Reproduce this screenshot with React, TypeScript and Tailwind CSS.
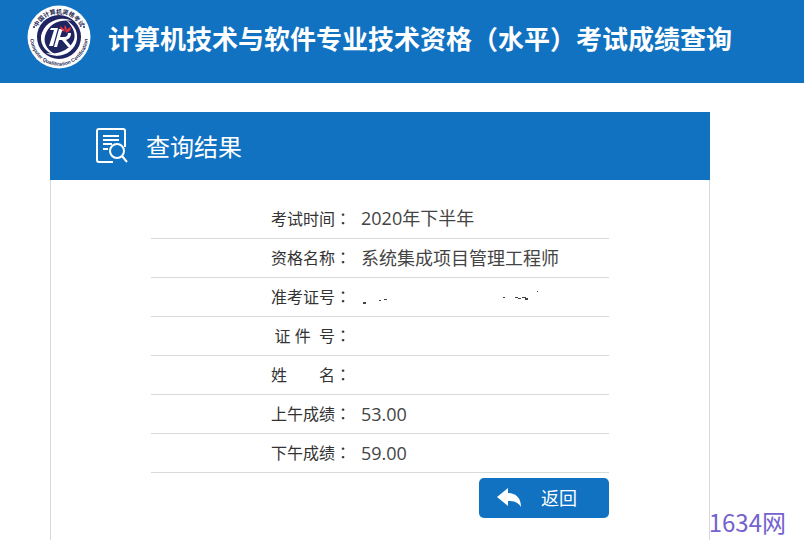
const rows = [
  { label: '考试时间', value: '2020年下半年' },
  { label: '资格名称', value: '系统集成项目管理工程师' },
  { label: '准考证号', value: '', masked: true },
  { label: '证\u00a0件\u00a0\u00a0号', value: '' },
  { label: '姓\u3000\u3000名', value: '' },
  { label: '上午成绩', value: '53.00' },
  { label: '下午成绩', value: '59.00' },
];

function Logo() {
  return (
    <svg viewBox="0 0 64 64" className="h-16 w-16 shrink-0" role="img" aria-label="中国计算机资格考试">
      <defs>
        <path id="ring-top" d="M8.5 32a23.5 23.5 0 0 1 47 0" />
        <path id="ring-bottom" d="M3.8 26a28.8 28.8 0 1 0 56.4 0" />
      </defs>
      <circle cx="32" cy="32" r="31.5" fill="#fff" />
      <text fontSize="6" fontWeight="700" fill="#23264f" textAnchor="middle">
        <textPath href="#ring-top" startOffset="50%">中国计算机资格考试</textPath>
      </text>
      <text fontSize="5" fontWeight="700" fill="#23264f" textAnchor="middle" className="font-['Liberation_Sans',sans-serif]">
        <textPath href="#ring-bottom" startOffset="50%">Computer Qualification Certification</textPath>
      </text>
      <circle cx="7" cy="22" r="1" fill="#23264f" />
      <circle cx="57" cy="22" r="1" fill="#23264f" />
      <circle cx="32" cy="32" r="22" fill="#1f2561" />
      {/* 内圈白色弧线 */}
      <path d="M45 16C33 10 17 17 14 31c-1 10 6 18 18 20-11-4-16-12-14-20 3-11 13-17 27-15z" fill="#fff" />
      <path d="M19 48c13 7 29 0 31-14 1-9-4-15-11-19 7 7 10 13 8 20-4 9-14 15-28 13z" fill="#fff" />
      <path d="M27 25h-4l1-2h7l-5 18h-4z" fill="#fff" />
      <path d="M32 24h5l-1 2h-1l-2 6h4c3 0 4-2 4-4h3c0 4-2 6-5 7l6 7h-4l-6-7h-3l-2 7h-3z" fill="#fff" />
      <path d="M33 21c2 1 4 3 5 6-3-1-5-3-5-6zM38 20c2 2 2 5 1 7-2-2-2-5-1-7zM44 22c0 3-2 5-5 6 0-3 2-5 5-6z" fill="#e5343c" />
    </svg>
  );
}

function ResultIcon() {
  return (
    <svg viewBox="0 0 32 36" className="h-9 w-8 shrink-0" fill="none" stroke="#fff" strokeWidth="2" aria-hidden="true">
      <path d="M17 34H3q-2 0-2-2V3q0-2 2-2h24q2 0 2 2v16" />
      <path d="M7 8h16M7 12h16M7 16h9M7 21h5" />
      <circle cx="21" cy="23" r="7" />
      <path d="m26 28 5 6" />
    </svg>
  );
}

// 打码后残留的笔画
function MaskedNumber() {
  return (
    <svg viewBox="0 0 180 18" className="h-[18px] w-[180px]" fill="#444" aria-hidden="true">
      <path d="M2 14h3v2H2zM18 12h2v1h-2zM23 11h3v1h-3zM142 9h2v1h-2zM154 9h3v1h-3zM157 10h3v1h-3zM161 9h4v1h-4zM164 10h3v2h-3zM176 3h1v1h-1z" />
    </svg>
  );
}

export default function App() {
  return (
    <div className="relative flex min-h-screen flex-col bg-white font-['Open_Sans','Noto_Sans_CJK_SC',sans-serif] text-[#444]">
      <header className="flex h-[83px] items-start gap-[17px] bg-[#1172c2] pt-[5px] pl-[27px]">
        <Logo />
        <h1 className="pt-[15px] text-[26px] leading-[38px] font-bold whitespace-nowrap text-white">
          计算机技术与软件专业技术资格（水平）考试成绩查询
        </h1>
      </header>

      <main className="mt-[29px] ml-[50px] flex w-full max-w-[660px] flex-1 flex-col">
        <div className="flex h-[68px] items-center gap-[18px] bg-[#1172c2] pl-[46px] text-white">
          <ResultIcon />
          <h2 className="pt-0.5 text-2xl">查询结果</h2>
        </div>

        <div className="flex-1 border-x border-[#d9d9d9] px-[100px] pt-[19px]">
          <table className="w-full border-collapse">
            <tbody>
              {rows.map(row => (
                <tr key={row.label} className="h-[39px] border-b border-[#d9d9d9]">
                  <th scope="row" className="w-[200px] p-0 text-right text-base font-normal whitespace-nowrap text-[#333]">
                    {row.label}
                    <span lang="zh-TW" className="font-['Noto_Sans_CJK_TC',sans-serif]">：</span>
                  </th>
                  <td className="p-0 pl-[10px] text-lg">
                    {row.masked ? <MaskedNumber /> : row.value}
                  </td>
                </tr>
              ))}
            </tbody>
          </table>

          <div className="mt-[5px] flex justify-end">
            <button
              type="button"
              className="flex h-10 w-[130px] items-center gap-5 rounded-[5px] bg-[#1172c2] pl-[18px] text-lg text-white"
            >
              <svg viewBox="0 0 24 20" className="h-5 w-6" fill="#fff" aria-hidden="true">
                <path d="M0 9 11 0v5c8 0 13 5 13 14-3-5-7-6-13-6v5z" />
              </svg>
              返回
            </button>
          </div>
        </div>
      </main>

      <div className="absolute right-[18px] bottom-0.5 font-['Noto_Sans_CJK_SC',sans-serif] text-2xl leading-8 text-[#7462cf]">
        1634网
      </div>
    </div>
  );
}
